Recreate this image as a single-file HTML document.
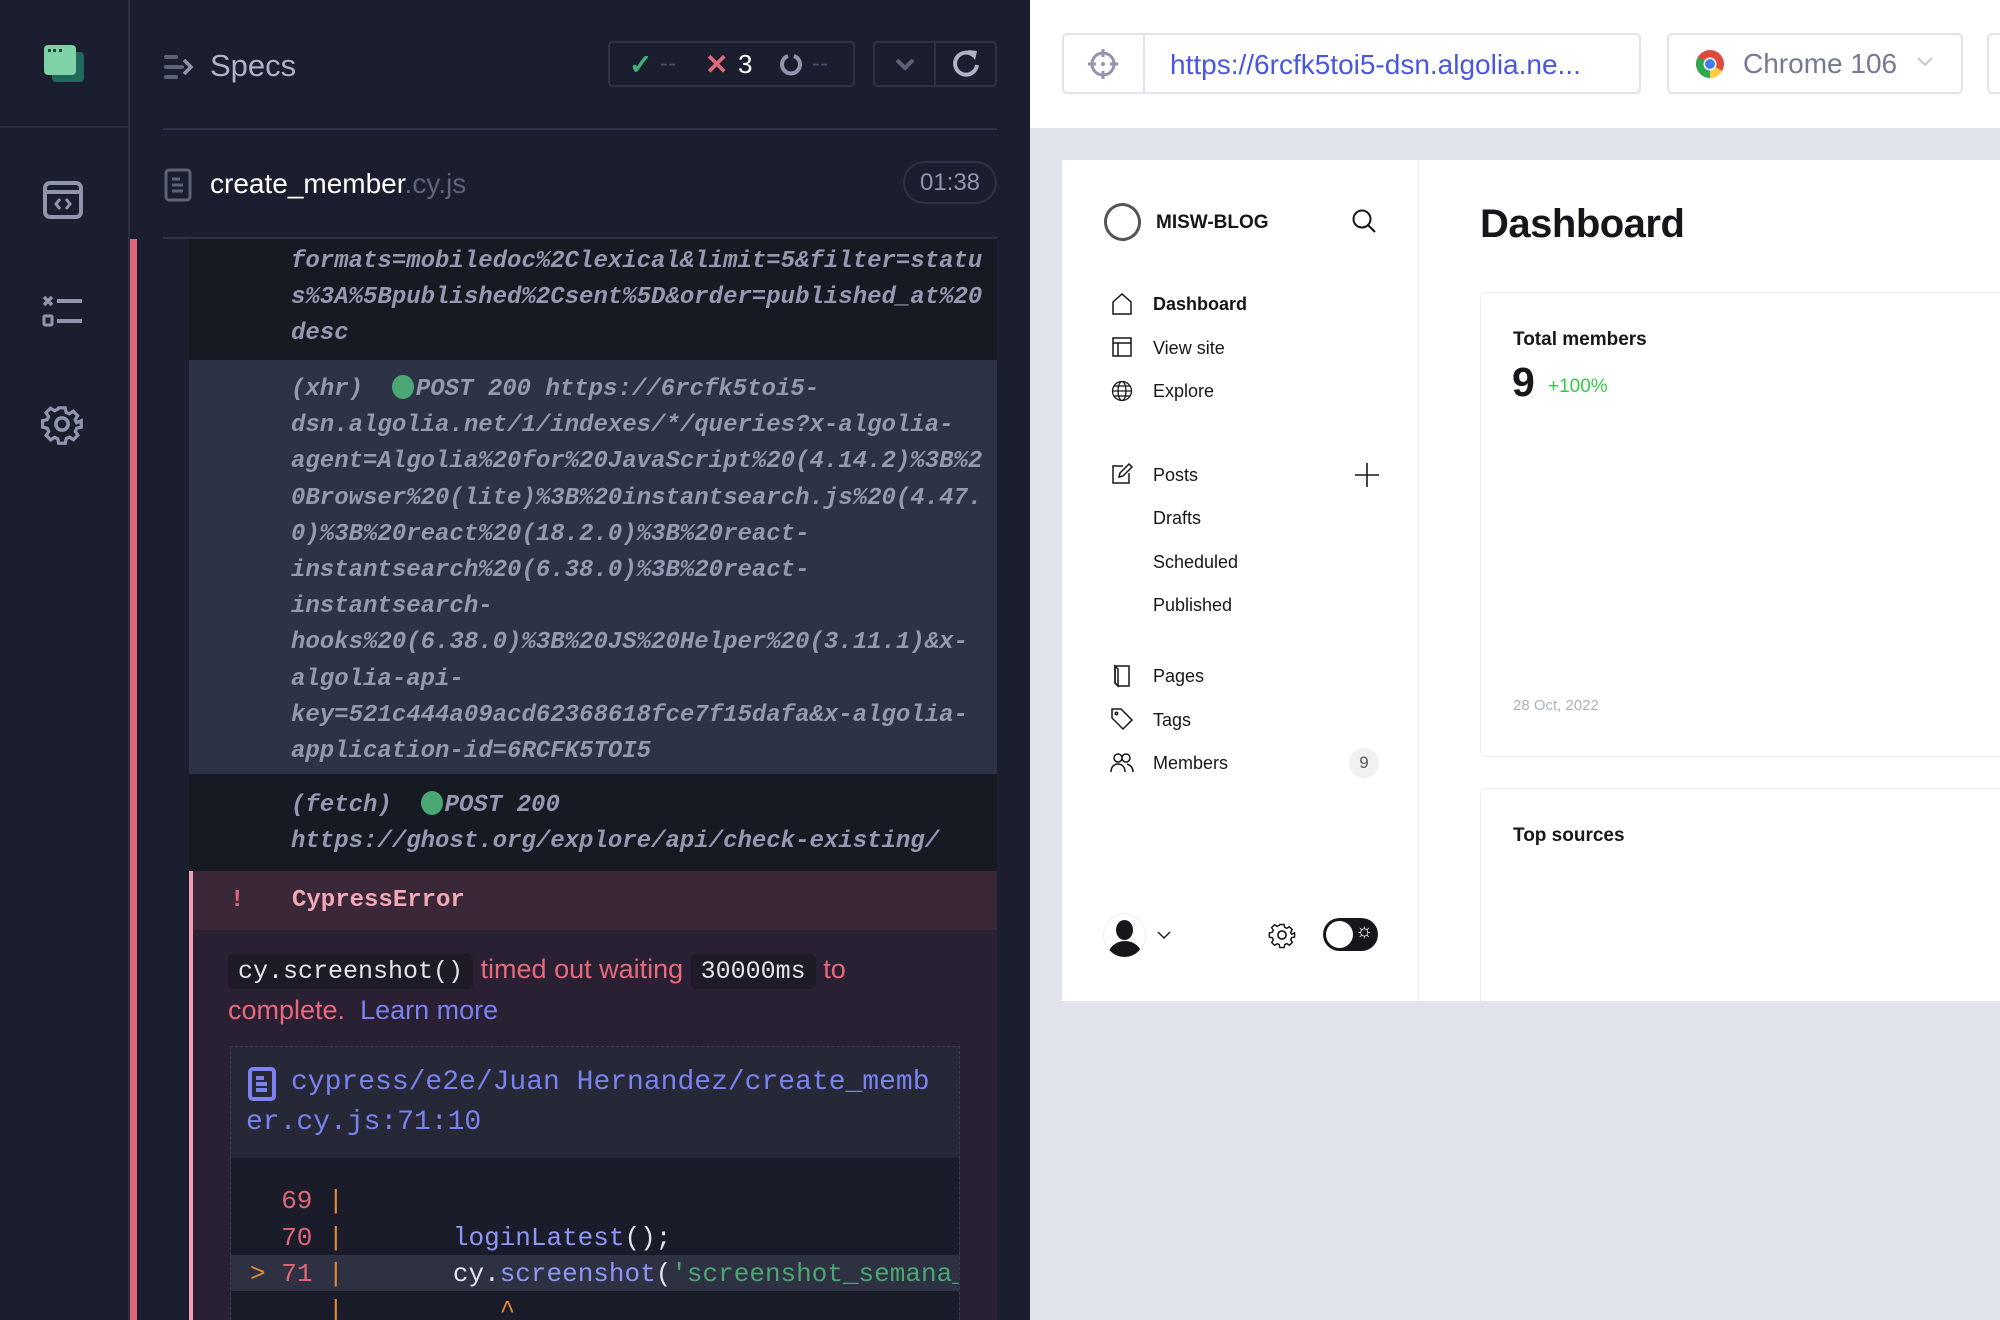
<!DOCTYPE html>
<html><head><meta charset="utf-8"><style>
*{margin:0;padding:0;box-sizing:border-box}
body{width:2000px;height:1320px;overflow:hidden;background:#e1e3ec;font-family:"Liberation Sans",sans-serif;position:relative}
.a{position:absolute}
.mono{font-family:"Liberation Mono","DejaVu Sans Mono",monospace}
.log{font-family:"Liberation Mono",monospace;font-style:italic;font-weight:bold;font-size:24px;line-height:36.2px;color:#9599b0;white-space:pre}
.dot{display:inline-block;width:22px;height:24px;border-radius:50%;background:#4aa773;vertical-align:-4px;margin-right:2px}
.nav{position:absolute;left:1153px;font-size:18px;color:#15171a}
.ic{position:absolute;left:1110px}
</style></head><body>
<div class="a" style="left:0;top:0;width:1030px;height:1320px;background:#1b1e2e"></div>
<div class="a" style="left:128px;top:0;width:2px;height:1320px;background:#2a2d40"></div>
<div class="a" style="left:0;top:126px;width:128px;height:2px;background:#2a2d40"></div>
<div class="a" style="left:52px;top:52px;width:32px;height:30px;background:#1f6a5a;border-radius:4px"></div>
<div class="a" style="left:44px;top:45px;width:32px;height:30px;background:#7fd1a6;border-radius:4px"></div>
<div class="a" style="left:48px;top:49px;width:14px;height:3px;border-top:3px dotted #1f4a40"></div>
<svg class="a" style="left:42px;top:180px" width="42" height="40" viewBox="0 0 42 40"><rect x="3" y="3" width="36" height="34" rx="5" fill="none" stroke="#9095ad" stroke-width="4"/><line x1="3" y1="12" x2="39" y2="12" stroke="#9095ad" stroke-width="4"/><path d="M18 19l-4 5 4 5M24 19l4 5-4 5" fill="none" stroke="#9095ad" stroke-width="3"/></svg>
<svg class="a" style="left:42px;top:294px" width="42" height="36" viewBox="0 0 42 36"><path d="M2 3l8 8M10 3l-8 8" stroke="#9095ad" stroke-width="3.5"/><line x1="15" y1="7" x2="40" y2="7" stroke="#9095ad" stroke-width="4"/><rect x="2" y="22" width="8" height="9" rx="1" fill="none" stroke="#9095ad" stroke-width="3"/><line x1="15" y1="27" x2="40" y2="27" stroke="#9095ad" stroke-width="4"/></svg>
<svg class="a" style="left:41px;top:403px" width="42" height="42" viewBox="0 0 24 24"><path fill="none" stroke="#9095ad" stroke-width="2" d="M10 2h4l.6 2.8 2 .9 2.4-1.6 2.8 2.8-1.6 2.4.9 2L24 10v4l-2.8.6-.9 2 1.6 2.4-2.8 2.8-2.4-1.6-2 .9L14 24h-4l-.6-2.8-2-.9-2.4 1.6-2.8-2.8 1.6-2.4-.9-2L0 14v-4l2.8-.6.9-2L2.1 5l2.8-2.8 2.4 1.6 2-.9z" transform="scale(.92) translate(1 1)"/><circle cx="12" cy="12" r="3.5" fill="none" stroke="#9095ad" stroke-width="2"/></svg>
<svg class="a" style="left:164px;top:54px" width="30" height="26" viewBox="0 0 30 26"><g stroke="#5e6378" stroke-width="4" stroke-linecap="round"><line x1="2" y1="3" x2="12" y2="3"/><line x1="2" y1="13" x2="18" y2="13"/><line x1="2" y1="23" x2="12" y2="23"/></g><path d="M20 6l7 7-7 7" fill="none" stroke="#9095ad" stroke-width="3.5"/></svg>
<div class="a" style="left:210px;top:48px;font-size:31px;color:#afb3c7">Specs</div>
<div class="a" style="left:608px;top:41px;width:247px;height:46px;border:2px solid #2e3247;border-radius:5px"></div>
<div class="a" style="left:629px;top:48px;font-size:28px;color:#3fb07a;font-weight:bold">✓</div>
<div class="a" style="left:660px;top:50px;font-size:24px;color:#4a4e66">--</div>
<div class="a" style="left:705px;top:48px;font-size:28px;color:#e06a7a;font-weight:bold">✕</div>
<div class="a" style="left:738px;top:49px;font-size:26px;color:#fff">3</div>
<svg class="a" style="left:780px;top:53px" width="22" height="24" viewBox="0 0 22 24"><path d="M8 3A9 9 0 1 0 14 3" fill="none" stroke="#9095ad" stroke-width="4"/></svg>
<div class="a" style="left:812px;top:50px;font-size:24px;color:#4a4e66">--</div>
<div class="a" style="left:873px;top:41px;width:124px;height:46px;border:2px solid #2e3247;border-radius:5px"></div>
<div class="a" style="left:934px;top:41px;width:2px;height:46px;background:#2e3247"></div>
<svg class="a" style="left:894px;top:56px" width="22" height="16" viewBox="0 0 22 16"><path d="M3 4l8 8 8-8" fill="none" stroke="#5e6378" stroke-width="4"/></svg>
<svg class="a" style="left:952px;top:46px" width="30" height="34" viewBox="0 0 30 34"><path d="M22 10A11 11 0 1 0 25 19" fill="none" stroke="#afb3c7" stroke-width="4"/><path d="M16 4l9 1-2 9z" fill="#afb3c7"/></svg>
<div class="a" style="left:163px;top:128px;width:834px;height:2px;background:#2e3247"></div>
<svg class="a" style="left:164px;top:168px" width="28" height="34" viewBox="0 0 28 34"><rect x="2" y="2" width="24" height="30" rx="3" fill="none" stroke="#5e6378" stroke-width="3"/><g stroke="#5e6378" stroke-width="3"><line x1="8" y1="11" x2="16" y2="11"/><line x1="8" y1="17" x2="19" y2="17"/><line x1="8" y1="23" x2="19" y2="23"/></g></svg>
<div class="a" style="left:210px;top:168px;font-size:28px;color:#fff">create_member<span style="color:#5e6378">.cy.js</span></div>
<div class="a" style="left:903px;top:161px;width:94px;height:43px;border:2px solid #2e3247;border-radius:22px;color:#9095ad;font-size:24px;text-align:center;line-height:39px">01:38</div>
<div class="a" style="left:163px;top:237px;width:834px;height:2px;background:#2e3247"></div>
<div class="a" style="left:130px;top:239px;width:7px;height:1081px;background:#e0677a"></div>
<div class="a" style="left:189px;top:239px;width:808px;height:121px;background:#171923"></div>
<div class="log a" style="left:291px;top:244px">formats=mobiledoc%2Clexical&amp;limit=5&amp;filter=statu
s%3A%5Bpublished%2Csent%5D&amp;order=published_at%20
desc</div>
<div class="a" style="left:189px;top:360px;width:808px;height:414px;background:#2e3247"></div>
<div class="log a" style="left:291px;top:372px">(xhr)  <span class="dot"></span>POST 200 https://6rcfk5toi5-
dsn.algolia.net/1/indexes/*/queries?x-algolia-
agent=Algolia%20for%20JavaScript%20(4.14.2)%3B%2
0Browser%20(lite)%3B%20instantsearch.js%20(4.47.
0)%3B%20react%20(18.2.0)%3B%20react-
instantsearch%20(6.38.0)%3B%20react-
instantsearch-
hooks%20(6.38.0)%3B%20JS%20Helper%20(3.11.1)&amp;x-
algolia-api-
key=521c444a09acd62368618fce7f15dafa&amp;x-algolia-
application-id=6RCFK5TOI5</div>
<div class="a" style="left:189px;top:774px;width:808px;height:97px;background:#171923"></div>
<div class="log a" style="left:291px;top:788px">(fetch)  <span class="dot"></span>POST 200
https://ghost.org/explore/api/check-existing/</div>
<div class="a" style="left:189px;top:871px;width:808px;height:449px;background:#2a2033;border-left:4px solid #f0a0ae"></div>
<div class="a" style="left:193px;top:871px;width:804px;height:59px;background:#3a2838"></div>
<div class="a mono" style="left:230px;top:887px;font-size:24px;color:#e0677a;font-weight:bold">!</div>
<div class="a mono" style="left:292px;top:887px;font-size:24px;color:#f3a8b6;font-weight:bold">CypressError</div>
<div class="a" style="left:228px;top:950px;font-size:27px;line-height:38px;color:#e8687c;width:770px">
<span class="mono" style="background:#1e1a26;color:#e1e3ed;padding:3px 10px;border-radius:5px;font-size:25px">cy.screenshot()</span> timed out waiting <span class="mono" style="background:#1e1a26;color:#e1e3ed;padding:3px 10px;border-radius:5px;font-size:25px">30000ms</span> to<br>complete.&nbsp; <span style="color:#7a82f0">Learn more</span></div>
<div class="a" style="left:230px;top:1046px;width:730px;height:274px;border:1px dashed #3a3c50;background:#262838"></div>
<svg class="a" style="left:248px;top:1067px" width="28" height="34" viewBox="0 0 28 34"><rect x="2" y="2" width="24" height="30" rx="3" fill="none" stroke="#7a82f0" stroke-width="4"/><g stroke="#7a82f0" stroke-width="4"><line x1="8" y1="11" x2="16" y2="11"/><line x1="8" y1="17" x2="19" y2="17"/><line x1="8" y1="23" x2="19" y2="23"/></g></svg>
<div class="a mono" style="left:246px;top:1063px;font-size:28px;line-height:40px;color:#7a82f0;white-space:pre;text-indent:45px">cypress/e2e/Juan Hernandez/create_memb
er.cy.js:71:10</div>
<div class="a" style="left:231px;top:1158px;width:728px;height:162px;background:#1b1c2a"></div>
<div class="a" style="left:231px;top:1255px;width:728px;height:36px;background:#2e3142"></div>
<div class="a" style="left:231px;top:1158px;width:728px;height:162px;overflow:hidden">
<div class="a mono" style="left:19px;top:25px;font-size:26px;line-height:36.5px;white-space:pre;color:#e1e3ed"><span style="color:#e0677a">  69</span> <span style="color:#e08a3a">|</span>
<span style="color:#e0677a">  70</span> <span style="color:#e08a3a">|</span>       <span style="color:#8f96f5">loginLatest</span>();
<span style="color:#e08a3a">&gt;</span> <span style="color:#e0677a">71</span> <span style="color:#e08a3a">|</span>       cy.<span style="color:#8f96f5">screenshot</span>(<span style="color:#4aa773">'screenshot_semana_2'</span>
     <span style="color:#e08a3a">|</span>          <span style="color:#e08a3a">^</span></div></div>
<div class="a" style="left:1030px;top:0;width:970px;height:128px;background:#fff"></div>
<div class="a" style="left:1062px;top:33px;width:579px;height:61px;border:2px solid #e1e3ec;border-radius:5px"></div>
<div class="a" style="left:1143px;top:33px;width:2px;height:61px;background:#e1e3ec"></div>
<svg class="a" style="left:1087px;top:48px" width="32" height="32" viewBox="0 0 32 32"><circle cx="16" cy="16" r="11" fill="none" stroke="#9095ad" stroke-width="3"/><g stroke="#9095ad" stroke-width="3"><line x1="16" y1="1" x2="16" y2="9"/><line x1="16" y1="23" x2="16" y2="31"/><line x1="1" y1="16" x2="9" y2="16"/><line x1="23" y1="16" x2="31" y2="16"/></g><circle cx="16" cy="16" r="2" fill="#9095ad"/></svg>
<div class="a" style="left:1170px;top:49px;font-size:28px;color:#4956e3">https://6rcfk5toi5-dsn.algolia.ne...</div>
<div class="a" style="left:1667px;top:33px;width:296px;height:61px;border:2px solid #e1e3ec;border-radius:5px"></div>
<div class="a" style="left:1987px;top:33px;width:30px;height:61px;border:2px solid #e1e3ec;border-radius:5px"></div>
<svg class="a" style="left:1695px;top:49px" width="30" height="30" viewBox="0 0 30 30"><circle cx="15" cy="15" r="14" fill="#dd4b3e"/><path d="M15 15L27.1 22A14 14 0 0 1 3 22z" fill="#ffcd40"/><path d="M15 15L3 22A14 14 0 0 1 1 15 14 14 0 0 1 3 8z" fill="#2da94f"/><path d="M15 29A14 14 0 0 0 27.1 22L15 15z" fill="#ffcd40"/><path d="M3 22A14 14 0 0 0 15 29L15 15z" fill="#2da94f"/><circle cx="15" cy="15" r="6.5" fill="#fff"/><circle cx="15" cy="15" r="5" fill="#3f7ee8"/></svg>
<div class="a" style="left:1743px;top:48px;font-size:28px;color:#757a92">Chrome 106</div>
<svg class="a" style="left:1916px;top:56px" width="18" height="12" viewBox="0 0 18 12"><path d="M2 2l7 7 7-7" fill="none" stroke="#c5c8d6" stroke-width="2"/></svg>
<div class="a" style="left:1062px;top:160px;width:938px;height:841px;background:#fff"></div>
<div class="a" style="left:1418px;top:160px;width:1px;height:841px;background:#eceef0"></div>
<div class="a" style="left:1104px;top:203px;width:37px;height:38px;border:3px solid #555;border-radius:50%;transform:rotate(-10deg)"></div>
<div class="a" style="left:1156px;top:212px;font-size:19px;font-weight:bold;color:#15171a">MISW-BLOG</div>
<svg class="a" style="left:1351px;top:208px" width="26" height="26" viewBox="0 0 26 26"><circle cx="11" cy="11" r="8.5" fill="none" stroke="#15171a" stroke-width="2"/><line x1="17" y1="17" x2="24" y2="24" stroke="#15171a" stroke-width="2"/></svg>
<svg class="ic" style="top:292px" width="24" height="24" viewBox="0 0 24 24" fill="none" stroke="#15171a" stroke-width="1.5"><path d="M3 10l9-8 9 8v12H3z"/></svg>
<div class="nav" style="top:294px;font-weight:bold">Dashboard</div>
<svg class="ic" style="top:335px" width="24" height="24" viewBox="0 0 24 24" fill="none" stroke="#15171a" stroke-width="1.5"><rect x="3" y="3" width="18" height="18"/><line x1="3" y1="8" x2="21" y2="8"/><line x1="8" y1="8" x2="8" y2="21"/></svg>
<div class="nav" style="top:338px">View site</div>
<svg class="ic" style="top:379px" width="24" height="24" viewBox="0 0 24 24" fill="none" stroke="#15171a" stroke-width="1.3"><circle cx="12" cy="12" r="9.5"/><ellipse cx="12" cy="12" rx="4" ry="9.5"/><line x1="2.5" y1="12" x2="21.5" y2="12"/><line x1="4" y1="7" x2="20" y2="7"/><line x1="4" y1="17" x2="20" y2="17"/></svg>
<div class="nav" style="top:381px">Explore</div>
<svg class="ic" style="top:462px" width="24" height="24" viewBox="0 0 24 24" fill="none" stroke="#15171a" stroke-width="1.5"><path d="M13 4H3v17h16V11"/><path d="M19 2l3 3-9 9-4 1 1-4z"/></svg>
<div class="nav" style="top:465px">Posts</div>
<svg class="a" style="left:1354px;top:462px" width="26" height="26" viewBox="0 0 26 26"><path d="M13 1v24M1 13h24" stroke="#15171a" stroke-width="1.6"/></svg>
<div class="nav" style="top:508px">Drafts</div>
<div class="nav" style="top:552px">Scheduled</div>
<div class="nav" style="top:595px">Published</div>
<svg class="ic" style="top:664px" width="24" height="24" viewBox="0 0 24 24" fill="none" stroke="#15171a" stroke-width="1.5"><path d="M5 2h14v20H8l-3-3z"/><path d="M5 2v17l3 3V5z"/></svg>
<div class="nav" style="top:666px">Pages</div>
<svg class="ic" style="top:707px" width="24" height="24" viewBox="0 0 24 24" fill="none" stroke="#15171a" stroke-width="1.5"><path d="M2 2h9l11 11-9 9L2 11z"/><circle cx="6.5" cy="6.5" r="1.2"/></svg>
<div class="nav" style="top:710px">Tags</div>
<svg class="ic" style="top:751px" width="24" height="24" viewBox="0 0 24 24" fill="none" stroke="#15171a" stroke-width="1.5"><circle cx="8" cy="7" r="4"/><path d="M1 21c0-5 3-8 7-8s7 3 7 8"/><circle cx="16" cy="7" r="4"/><path d="M17 13c3 1 6 3 6 8"/></svg>
<div class="nav" style="top:753px">Members</div>
<div class="a" style="left:1349px;top:748px;width:30px;height:30px;border-radius:50%;background:#eff1f3;text-align:center;line-height:30px;font-size:17px;color:#555">9</div>
<div class="a" style="left:1103px;top:913px;width:43px;height:45px;border-radius:50%;border:1px solid #eee;overflow:hidden;background:#fff">
<div class="a" style="left:12px;top:6px;width:17px;height:20px;border-radius:50%;background:#15171a"></div>
<div class="a" style="left:4px;top:27px;width:34px;height:30px;border-radius:50%;background:#15171a"></div></div>
<svg class="a" style="left:1156px;top:930px" width="16" height="10" viewBox="0 0 16 10"><path d="M2 2l6 6 6-6" fill="none" stroke="#15171a" stroke-width="1.4"/></svg>
<svg class="a" style="left:1268px;top:921px" width="28" height="28" viewBox="0 0 24 24"><path fill="none" stroke="#15171a" stroke-width="1.4" d="M10 2h4l.6 2.8 2 .9 2.4-1.6 2.8 2.8-1.6 2.4.9 2L24 10v4l-2.8.6-.9 2 1.6 2.4-2.8 2.8-2.4-1.6-2 .9L14 24h-4l-.6-2.8-2-.9-2.4 1.6-2.8-2.8 1.6-2.4-.9-2L0 14v-4l2.8-.6.9-2L2.1 5l2.8-2.8 2.4 1.6 2-.9z" transform="scale(.9) translate(1.3 1.3)"/><circle cx="12" cy="12" r="3.5" fill="none" stroke="#15171a" stroke-width="1.4"/></svg>
<div class="a" style="left:1323px;top:918px;width:55px;height:33px;border-radius:17px;background:#15171a"></div>
<div class="a" style="left:1326px;top:921px;width:27px;height:27px;border-radius:50%;background:#fff"></div>
<div class="a" style="left:1355px;top:920px;font-size:20px;color:#fff">☼</div>
<div class="a" style="left:1480px;top:202px;font-size:40px;font-weight:bold;color:#15171a;letter-spacing:-0.5px">Dashboard</div>
<div class="a" style="left:1480px;top:292px;width:540px;height:465px;border:1.5px solid #ebeef0;border-radius:6px"></div>
<div class="a" style="left:1513px;top:329px;font-size:19px;font-weight:bold;color:#15171a">Total members</div>
<div class="a" style="left:1512px;top:359px;font-size:41px;font-weight:bold;color:#15171a">9</div>
<div class="a" style="left:1548px;top:376px;font-size:19px;color:#30cf43">+100%</div>
<div class="a" style="left:1513px;top:697px;font-size:15px;color:#abb4be">28 Oct, 2022</div>
<div class="a" style="left:1480px;top:788px;width:540px;height:260px;border:1.5px solid #ebeef0;border-radius:6px"></div>
<div class="a" style="left:1513px;top:825px;font-size:19px;font-weight:bold;color:#15171a">Top sources</div>
<div class="a" style="left:1062px;top:1001px;width:938px;height:319px;background:#e1e3ec"></div>
</body></html>
